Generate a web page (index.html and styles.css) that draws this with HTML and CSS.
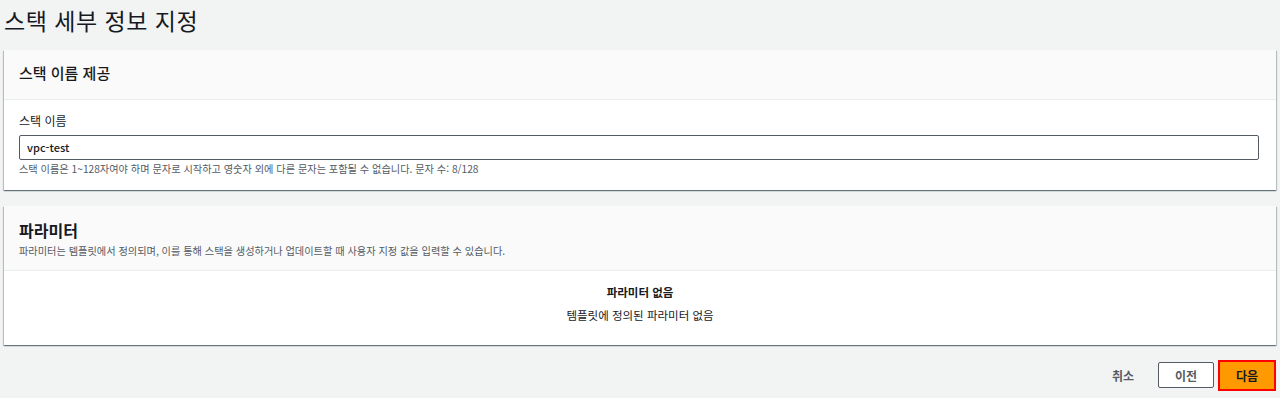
FILE: index.html
```html
<!DOCTYPE html>
<html lang="ko">
<head>
<meta charset="utf-8">
<link rel="stylesheet" href="styles.css">
</head>
<body>
<div class="page">
  <h1 class="title">스택 세부 정보 지정</h1>

  <section class="card">
    <div class="card-header">
      <h2 class="card-title">스택 이름 제공</h2>
    </div>
    <div class="card-body">
      <label class="field-label">스택 이름</label>
      <div class="input">vpc-test</div>
      <p class="hint">스택 이름은 1~128자여야 하며 문자로 시작하고 영숫자 외에 다른 문자는 포함될 수 없습니다. 문자 수: 8/128</p>
    </div>
  </section>

  <section class="card">
    <div class="card-header header-tall">
      <h2 class="card-title bold">파라미터</h2>
      <p class="desc">파라미터는 템플릿에서 정의되며, 이를 통해 스택을 생성하거나 업데이트할 때 사용자 지정 값을 입력할 수 있습니다.</p>
    </div>
    <div class="card-body empty">
      <p class="empty-title">파라미터 없음</p>
      <p class="empty-text">템플릿에 정의된 파라미터 없음</p>
    </div>
  </section>

  <div class="actions">
    <button class="btn-link">취소</button>
    <button class="btn-normal">이전</button>
    <button class="btn-primary">다음</button>
  </div>
</div>
</body>
</html>
```

FILE: styles.css
```css
* { box-sizing: border-box; }
html, body {
  margin: 0;
  padding: 0;
  background: #f2f3f3;
  font-family: "Noto Sans CJK KR", "Noto Sans", sans-serif;
  color: #16191f;
}
.page {
  width: 1280px;
  height: 398px;
  padding: 0 4px 0 4px;
  overflow: hidden;
}
.title {
  margin: 0;
  padding-top: 5px;
  height: 50px;
  font-size: 23px;
  font-weight: 400;
  line-height: 30px;
  letter-spacing: 0.5px;
  color: #16191f;
}
.card {
  background: #fff;
  box-shadow: 0 1px 1px 0 rgba(0,28,36,.35), 1px 1px 1px 0 rgba(0,28,36,.2), -1px 1px 1px 0 rgba(0,28,36,.2);
  margin-bottom: 16px;
}
.card-header {
  background: #fafafa;
  border-bottom: 1px solid #eaeded;
  height: 50px;
  padding: 12px 16px 0 15px;
}
.header-tall {
  height: 65px;
  padding-top: 13px;
}
.card-title {
  margin: 0;
  font-size: 15px;
  font-weight: 500;
  line-height: 22px;
}
.card-title.bold {
  font-size: 16px;
  font-weight: 700;
  line-height: 22px;
}
.desc {
  margin: 3px 0 0;
  font-size: 10.2px;
  line-height: 14px;
  color: #545b64;
}
.card-body {
  padding: 12px 16px 14px 15px;
}
.field-label {
  display: block;
  font-size: 12px;
  line-height: 18px;
  height: 23px;
  color: #16191f;
}
.input {
  height: 25px;
  border: 1px solid #545b64;
  border-radius: 2px;
  padding: 0 7px;
  font-size: 11px;
  font-weight: 500;
  line-height: 23px;
  color: #16191f;
  background: #fff;
  margin-right: 1px;
}
.hint {
  margin: 2px 0 0;
  font-size: 10.2px;
  line-height: 14px;
  color: #545b64;
}
.empty {
  height: 74px;
  padding: 12px 16px;
  text-align: center;
}
.empty-title {
  margin: 0;
  font-size: 11.5px;
  font-weight: 700;
  line-height: 18px;
  color: #16191f;
}
.empty-title + .empty-text { margin-top: 5px; }
.empty-text {
  margin: 0;
  font-size: 11.5px;
  line-height: 18px;
  color: #16191f;
}
.actions {
  display: flex;
  justify-content: flex-end;
  align-items: center;
  margin-top: -2px;
  padding-right: 0;
  height: 32px;
}
.actions button {
  font-family: inherit;
  font-size: 12px;
  font-weight: 700;
  cursor: pointer;
}
.btn-link {
  background: none;
  border: none;
  color: #545b64;
  padding: 0;
  margin-right: 24px;
}
.btn-normal {
  width: 56px;
  height: 26px;
  background: #fff;
  border: 1px solid #545b64;
  border-radius: 2px;
  color: #545b64;
  margin-right: 4px;
}
.btn-primary {
  width: 58px;
  height: 31px;
  background: #ff9900;
  border: 2px solid #ff0000;
  border-radius: 0;
  color: #16191f;
}
```
